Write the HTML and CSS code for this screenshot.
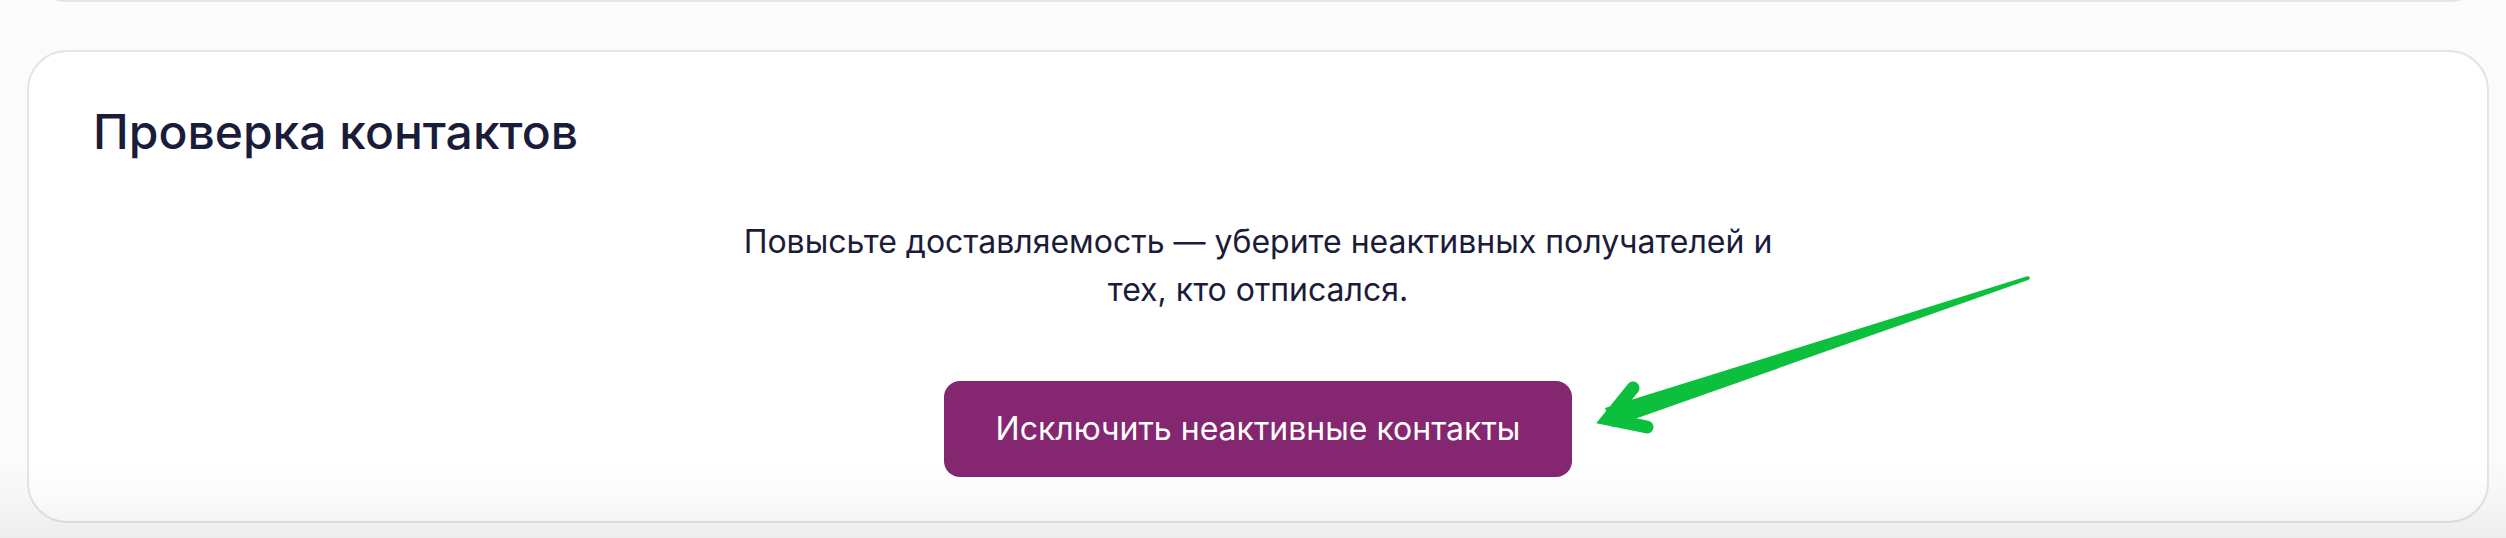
FILE: index.html
```html
<!DOCTYPE html>
<html lang="ru">
<head>
<meta charset="utf-8">
<title>Проверка контактов</title>
<link rel="stylesheet" href="styles.css">
</head>
<body>
<div class="page">
  <div class="card card-prev"></div>
  <section class="card card-main">
    <h2 class="card-title">Проверка контактов</h2>
    <div class="card-body">
      <p class="card-text">Повысьте доставляемость — уберите неактивных получателей и тех, кто отписался.</p>
      <button class="btn-primary" type="button">Исключить неактивные контакты</button>
    </div>
  </section>
  <svg class="annotation" width="2506" height="538" viewBox="0 0 2506 538" aria-hidden="true">
    <polygon points="1612,427 1605,408 2027.2,276.3 2028.8,279.7" fill="#0cbf3c"/>
    <circle cx="2028" cy="278" r="1.8" fill="#0cbf3c"/>
    <polyline points="1633,388 1608,419 1647,427" fill="none" stroke="#0cbf3c" stroke-width="13" stroke-linecap="round" stroke-linejoin="miter" stroke-miterlimit="6"/>
  </svg>
  <div class="fade"></div>
</div>
</body>
</html>
```
FILE: styles.css
```css
* { box-sizing: border-box; }

html, body {
  margin: 0;
  padding: 0;
}

body {
  background: #fbfbfb;
  font-family: Inter, "Noto Sans", "Liberation Sans", sans-serif;
  color: #1a1c3a;
  width: 2506px;
  height: 538px;
  overflow: hidden;
}

.page {
  position: relative;
  width: 2506px;
  height: 538px;
  padding: 0 17px 0 27px;
  display: flex;
  flex-direction: column;
}

.card {
  background: #ffffff;
  border: 2px solid #e3e3e8;
  border-radius: 40px;
}

.card-prev {
  height: 100px;
  margin-top: -98px;
  flex: none;
}

.card-main {
  margin-top: 48px;
  padding: 51px 64px 44px;
  display: flex;
  flex-direction: column;
}

.card-title {
  margin: 0;
  font-size: 48px;
  line-height: 58px;
  font-weight: 500;
  color: #1a1c3a;
  letter-spacing: 0;
}

.card-body {
  display: flex;
  flex-direction: column;
  align-items: center;
  margin-top: 57px;
}

.card-text {
  margin: 0;
  max-width: 1066px;
  text-align: center;
  font-size: 32px;
  line-height: 48px;
  font-weight: 400;
  color: #1a1c3a;
}

.btn-primary {
  margin-top: 67px;
  border: none;
  border-radius: 16px;
  background: #852670;
  color: #ffffff;
  font-family: Inter, "Noto Sans", "Liberation Sans", sans-serif;
  font-size: 32px;
  line-height: 48px;
  font-weight: 400;
  padding: 24px 52px;
  cursor: pointer;
}

.annotation {
  position: absolute;
  left: 0;
  top: 0;
  pointer-events: none;
}

.fade {
  position: absolute;
  left: 0;
  right: 0;
  bottom: 0;
  height: 80px;
  background: linear-gradient(to bottom, rgba(0,0,0,0) 0%, rgba(0,0,0,0.02) 50%, rgba(0,0,0,0.055) 100%);
  pointer-events: none;
}
```
